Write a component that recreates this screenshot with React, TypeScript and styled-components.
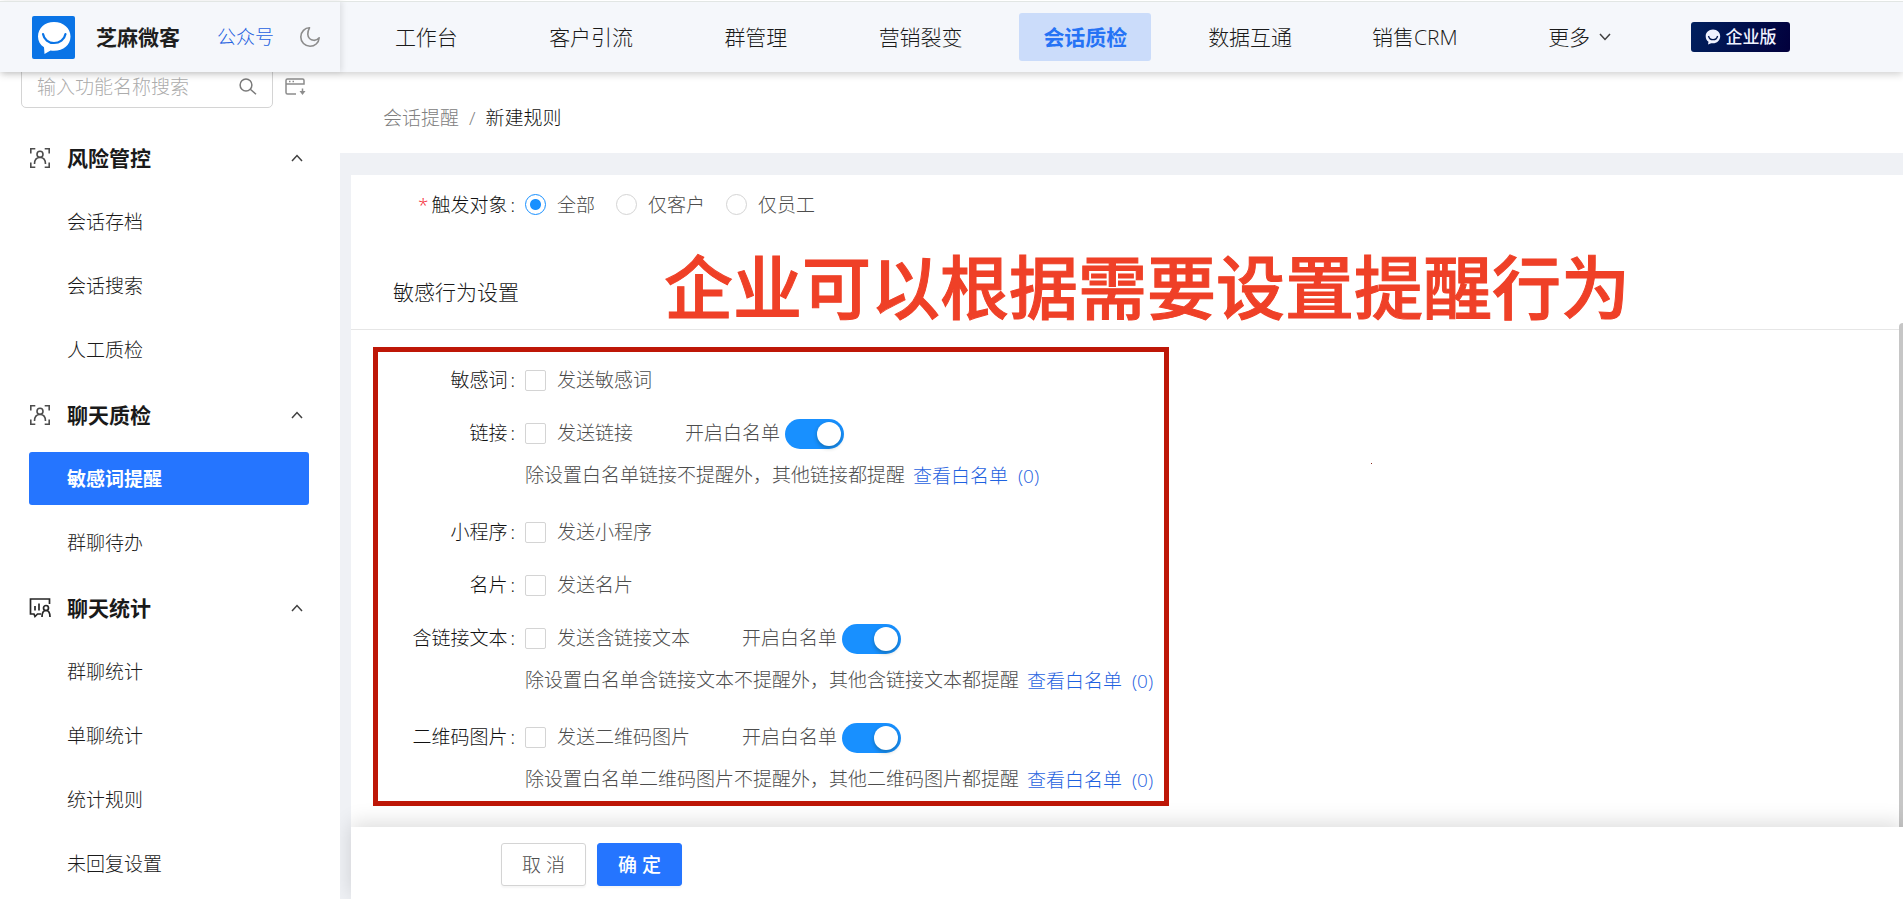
import React, { useState } from "react";
import styled, { createGlobalStyle, css } from "styled-components";

const GlobalStyle = createGlobalStyle`
  * { box-sizing: border-box; }
  html, body, #root { height: 100%; }
  body {
    margin: 0;
    overflow: hidden;
    background: #fff;
    color: #1a1a1a;
    font-family: "Open Sans", "Noto Sans CJK SC", sans-serif;
    font-size: 19px;
    font-weight: 300;
    line-height: 28px;
  }
  button, input { font: inherit; color: inherit; }
  a { color: inherit; text-decoration: none; }
  svg { flex: none; }
`;

const Page = styled.div`
  display: flex;
  flex-direction: column;
  height: 100vh;
`;

const Header = styled.header`
  position: relative;
  z-index: 3;
  display: flex;
  flex: none;
  height: 72px;
  border-top: 1px solid #fff;
  background: #f5f7fb;
  box-shadow: 0 2px 8px rgba(0, 0, 0, 0.2);
`;

const Brand = styled.div`
  display: flex;
  align-items: center;
  flex: none;
  width: 340px;
  padding: 0 18px 0 32px;
  border-top: 1px solid #e2e6e4;
  box-shadow: 2px 0 6px rgba(0, 0, 0, 0.1);
`;

const BrandName = styled.strong`
  margin-left: 21px;
  font-size: 21px;
  font-weight: 700;
  color: #1f1f1f;
`;

const AccountLink = styled.a`
  margin: 0 25px 0 37px;
  color: #1f62e0;
`;

const IconButton = styled.button`
  display: flex;
  padding: 0;
  border: 0;
  background: none;
  color: #8c8c8c;
  cursor: pointer;
`;

const TopBar = styled.div`
  display: flex;
  align-items: center;
  flex: 1;
  min-width: 0;
  padding-left: 4px;
  border-top: 1px solid #e2e6e4;
`;

const Nav = styled.nav`
  display: flex;
  flex: 0 1 1318px;
`;

const NavCell = styled.div`
  display: flex;
  flex: 1;
  justify-content: center;
`;

const NavLink = styled.a<{ $active?: boolean }>`
  display: flex;
  align-items: center;
  gap: 9px;
  height: 48px;
  padding: 0 24px;
  border-radius: 3px;
  font-size: 21px;
  white-space: nowrap;
  ${(p) =>
    p.$active &&
    css`
      background: #cbdcfa;
      color: #2673f5;
      font-weight: 700;
    `}
`;

const Edition = styled.span`
  display: flex;
  align-items: center;
  justify-content: center;
  gap: 5px;
  width: 99px;
  height: 30px;
  margin-left: 29px;
  border-radius: 3px;
  background: linear-gradient(110deg, #00205e, #02003c);
  color: #f0f2ff;
  font-size: 17px;
  font-weight: 500;
`;

const Body = styled.div`
  display: flex;
  flex: 1;
  min-height: 0;
`;

const Sidebar = styled.aside`
  position: relative;
  z-index: 2;
  flex: none;
  width: 340px;
  background: #fff;
`;

const SearchRow = styled.div`
  display: flex;
  align-items: center;
  gap: 12px;
  margin: -6px 0 23px 21px;
`;

const SearchBox = styled.label`
  display: flex;
  align-items: center;
  width: 252px;
  height: 42px;
  padding: 0 15px;
  border: 1px solid #d4d4d4;
  border-radius: 5px;
  color: #7a7a7a;
`;

const SearchInput = styled.input`
  flex: 1;
  min-width: 0;
  padding: 0;
  border: 0;
  outline: 0;
  background: none;
  &::placeholder { color: #acacac; opacity: 1; }
`;

const Group = styled.section`
  margin: 0 31px 0 29px;
  padding-bottom: 1px;
`;

const GroupTitle = styled.button`
  display: flex;
  align-items: center;
  width: 100%;
  height: 53px;
  margin-bottom: 11px;
  padding: 0 6px 0 0;
  border: 0;
  background: none;
  text-align: left;
  font-size: 21px;
  font-weight: 700;
  cursor: pointer;
`;

const GroupName = styled.span`
  flex: 1;
  margin-left: 16px;
`;

const MenuLink = styled.a<{ $active?: boolean }>`
  display: flex;
  align-items: center;
  height: 53px;
  margin-bottom: 11px;
  padding-left: 38px;
  border-radius: 3px;
  ${(p) =>
    p.$active &&
    css`
      background: #2575ff;
      color: #fff;
      font-weight: 700;
    `}
`;

const Main = styled.main`
  display: flex;
  flex: 1;
  flex-direction: column;
  min-width: 0;
  background: #eff1f5;
`;

const Breadcrumb = styled.nav`
  display: flex;
  align-items: center;
  gap: 10px;
  height: 81px;
  padding: 10px 0 0 43px;
  background: #fff;
  color: #808080;
`;

const Current = styled.span`
  color: #111;
`;

const Panel = styled.div`
  position: relative;
  flex: 1;
  min-height: 0;
  margin: 22px 0 0 11px;
  background: #fff;
`;

const ScrollThumb = styled.div`
  position: absolute;
  top: 148px;
  right: 0;
  bottom: 0;
  width: 4px;
  border-radius: 4px 0 0 0;
  background: #c6c6c6;
`;

const TargetRow = styled.div`
  display: flex;
  align-items: center;
  height: 59px;
`;

const FieldLabel = styled.span<{ $inset: number }>`
  display: flex;
  justify-content: flex-end;
  gap: 3px;
  flex: none;
  width: ${(p) => p.$inset}px;
  padding-right: 10px;
  color: #111;
`;

const Star = styled.span`
  color: #f5222d;
`;

const Choice = styled.label`
  display: flex;
  align-items: center;
  gap: 11px;
  margin-right: 21px;
  color: #4d4d4d;
`;

const Radio = styled.input`
  appearance: none;
  width: 21px;
  height: 21px;
  margin: 0;
  border: 1px solid #d4d4d4;
  border-radius: 50%;
  background: #fff;
  &:checked {
    border-color: #1890ff;
    background: radial-gradient(circle, #1890ff 5px, #fff 6px);
  }
`;

const Checkbox = styled.input`
  appearance: none;
  width: 21px;
  height: 21px;
  margin: 0;
  border: 1px solid #d4d4d4;
  border-radius: 2px;
  background: #fff;
  &:checked { border-color: #1890ff; background: #1890ff; }
`;

const SectionHead = styled.div`
  display: flex;
  align-items: center;
  height: 96px;
  padding: 20px 0 0 42px;
  border-bottom: 1px solid #e6e6e6;
`;

const SectionTitle = styled.h2`
  margin: 0;
  font-size: 21px;
  font-weight: 300;
`;

const Callout = styled.div`
  position: absolute;
  top: 62px;
  left: 313px;
  color: #ef4027;
  font-size: 69px;
  font-weight: 500;
  -webkit-text-stroke: 1px #ef4027;
  line-height: 100px;
  white-space: nowrap;
`;

const RedDot = styled.i`
  position: absolute;
  top: 288px;
  left: 1020px;
  width: 1px;
  height: 1px;
  background: #8a2a1c;
`;

const Highlight = styled.div`
  max-width: 796px;
  margin: 17px 0 0 22px;
  padding: 7px 0 1px;
  border: 5px solid #be1707;
`;

const Rule = styled.div<{ $tall: boolean }>`
  &:not(:last-child) { margin-bottom: ${(p) => (p.$tall ? 15 : 11)}px; }
`;

const RuleLine = styled.div`
  display: flex;
  align-items: center;
  height: 42px;
  white-space: nowrap;
`;

const SwitchLabel = styled.label`
  display: flex;
  align-items: center;
  gap: 5px;
  margin-left: 31px;
  color: #4d4d4d;
`;

const Switch = styled.input`
  appearance: none;
  display: flex;
  align-items: center;
  width: 59px;
  height: 30px;
  margin: 2px 0 0;
  padding: 0 3px;
  border-radius: 15px;
  background: #bfbfbf;
  &::before {
    content: "";
    width: 24px;
    height: 24px;
    border-radius: 50%;
    background: #fff;
    box-shadow: 0 2px 4px rgba(0, 35, 11, 0.3);
  }
  &:checked { justify-content: flex-end; background: #1890ff; }
`;

const Help = styled.p`
  display: flex;
  align-items: center;
  gap: 8px;
  height: 42px;
  margin: 0;
  padding-left: 147px;
  color: #4d4d4d;
  white-space: nowrap;
`;

const HelpLink = styled.a`
  padding-top: 2px;
  color: #1f62e0;
  white-space: pre;
`;

const Footer = styled.footer`
  position: relative;
  z-index: 1;
  display: flex;
  gap: 11px;
  flex: none;
  height: 72px;
  margin-left: 11px;
  padding: 16px 0 0 150px;
  background: #fff;
  box-shadow: 0 -4px 20px rgba(0, 0, 0, 0.14);
`;

const Button = styled.button<{ $primary?: boolean }>`
  width: 85px;
  height: 43px;
  padding: 0;
  border: 1px solid ${(p) => (p.$primary ? "#2575ff" : "#d4d4d4")};
  border-radius: 3px;
  background: ${(p) => (p.$primary ? "#2575ff" : "#fff")};
  color: ${(p) => (p.$primary ? "#fff" : "#4d4d4d")};
  font-weight: ${(p) => (p.$primary ? 500 : 300)};
  box-shadow: 0 2px 2px rgba(0, 0, 0, 0.04);
  cursor: pointer;
`;

const Logo = () => (
  <svg width="43" height="43" viewBox="0 0 43 43" aria-hidden="true">
    <rect width="43" height="43" rx="2" fill="#0a74e6" />
    <path d="M22 6C13 6 6 12 6 20.500c0 4.500 2.200 8.300 6 10.800L12.500 38l6-3.500c1.100.2 2.300.3 3.500.3 9.500 0 16.500-6 16.500-14.300S31.500 6 22 6Z" fill="#fff" />
    <path d="M11 18c1 5.500 5.500 9 11 9s10.500-3.500 11.500-9" fill="none" stroke="#0a74e6" strokeWidth="2.200" strokeLinecap="round" />
  </svg>
);

const Moon = () => (
  <svg width="22" height="22" viewBox="0 0 22 22" fill="none" stroke="currentColor" strokeWidth="1.600" strokeLinejoin="round" aria-hidden="true">
    <path d="M10.500 1.800C6 1.700 1.800 5.600 1.800 11A9.300 9.300 0 0 0 11 20.300c4.700 0 8.800-3.300 9.200-8.600-1.700 2-3.500 2.800-5.500 2.600-3.200-.3-5.800-2.900-5.900-6.100 0-2.400.6-4.500 1.700-6.400Z" />
  </svg>
);

const SearchIcon = () => (
  <svg width="18" height="18" viewBox="0 0 18 18" fill="none" stroke="currentColor" strokeWidth="1.500" aria-hidden="true">
    <circle cx="7" cy="7" r="5.900" />
    <path d="m11.300 11.300 5.700 5" />
  </svg>
);

const WindowIcon = () => (
  <svg width="21" height="18" viewBox="0 0 21 18" fill="none" stroke="currentColor" strokeWidth="1.500" aria-hidden="true">
    <path d="M11 16H2.500A1.500 1.500 0 0 1 1 14.500v-12A1.500 1.500 0 0 1 2.500 1h15A1.500 1.500 0 0 1 19 2.500V6H1M17.500 10.500V15" />
    <path d="M4 3.500h1.500M7.500 3.500H9" />
    <path d="M14.500 13h6l-3 4Z" fill="currentColor" stroke="none" />
  </svg>
);

const Chevron = ({ up }: { up?: boolean }) => (
  <svg width="12" height="8" viewBox="0 0 12 8" fill="none" stroke="#404040" strokeWidth="1.500" aria-hidden="true">
    <path d={up ? "M1 7 6 1.500 11 7" : "M1 1 6 6.500 11 1"} />
  </svg>
);

const ScanUser = () => (
  <svg width="22" height="22" viewBox="0 0 22 22" fill="none" stroke="#4d4d4d" strokeWidth="1.600" aria-hidden="true">
    <path d="M1.800 6.500V1.800h4.500M15.700 1.800h4.500v4.700M20.200 15.500v4.700h-4.500M6.300 20.200H1.800v-4.700" />
    <circle cx="11" cy="7.300" r="3" />
    <path d="M5.500 17c0-4 2.200-6.500 5.500-6.500s5.500 2.500 5.500 6.500" />
  </svg>
);

const ChatStats = () => (
  <svg width="22" height="22" viewBox="0 0 22 22" fill="none" stroke="#262626" strokeWidth="1.700" aria-hidden="true">
    <path d="M20.500 7V2H1.500v15H5l1 2.500L8.500 17H12M6 9v4.500M10 6.500v7" />
    <circle cx="17" cy="11" r="2.500" />
    <path d="M13 20c0-4 1.500-6.500 4-6.500s4 2.500 4 6.500" />
  </svg>
);

const EditionMark = () => (
  <svg width="16" height="16" viewBox="0 0 16 16" aria-hidden="true">
    <path d="M8 .5C3.700.5.700 3.500.700 7.200c0 2.300 1 4.300 2.800 5.500L3 15.500l3.200-1.300c5 1 9-2.500 9-7C15.200 3.500 12.300.5 8 .5Z" fill="#f0f2ff" />
    <path d="M3.500 7c.6 2.400 2.300 3.700 4.500 3.700S12 9.400 12.600 7" fill="none" stroke="#011650" strokeWidth="1.300" />
  </svg>
);

const navItems = ["工作台", "客户引流", "群管理", "营销裂变", "会话质检", "数据互通", "销售CRM", "更多"];

const menu = [
  { name: "风险管控", icon: <ScanUser />, items: ["会话存档", "会话搜索", "人工质检"] },
  { name: "聊天质检", icon: <ScanUser />, items: ["敏感词提醒", "群聊待办"] },
  { name: "聊天统计", icon: <ChatStats />, items: ["群聊统计", "单聊统计", "统计规则", "未回复设置"] },
];

const rules = [
  { name: "敏感词", whitelist: false },
  { name: "链接", whitelist: true },
  { name: "小程序", whitelist: false },
  { name: "名片", whitelist: false },
  { name: "含链接文本", whitelist: true },
  { name: "二维码图片", whitelist: true },
];

export default function App() {
  const [target, setTarget] = useState("全部");

  return (
    <Page>
      <GlobalStyle />
      <Header>
        <Brand>
          <Logo />
          <BrandName>芝麻微客</BrandName>
          <AccountLink href="#account">公众号</AccountLink>
          <IconButton type="button" aria-label="深色模式"><Moon /></IconButton>
        </Brand>
        <TopBar>
          <Nav>
            {navItems.map((item) => (
              <NavCell key={item}>
                <NavLink href="#nav" $active={item === "会话质检"}>
                  {item}
                  {item === "更多" && <Chevron />}
                </NavLink>
              </NavCell>
            ))}
          </Nav>
          <Edition><EditionMark />企业版</Edition>
        </TopBar>
      </Header>
      <Body>
        <Sidebar>
          <SearchRow>
            <SearchBox>
              <SearchInput type="text" placeholder="输入功能名称搜索" aria-label="输入功能名称搜索" />
              <SearchIcon />
            </SearchBox>
            <IconButton type="button" aria-label="收起菜单"><WindowIcon /></IconButton>
          </SearchRow>
          {menu.map((group) => (
            <Group key={group.name}>
              <GroupTitle type="button">
                {group.icon}
                <GroupName>{group.name}</GroupName>
                <Chevron up />
              </GroupTitle>
              {group.items.map((item) => (
                <MenuLink key={item} href="#menu" $active={item === "敏感词提醒"}>{item}</MenuLink>
              ))}
            </Group>
          ))}
        </Sidebar>
        <Main>
          <Breadcrumb>
            <a href="#alerts">会话提醒</a>
            <span>/</span>
            <Current>新建规则</Current>
          </Breadcrumb>
          <Panel>
            <TargetRow role="radiogroup" aria-label="触发对象">
              <FieldLabel $inset={174}><Star>*</Star><span>触发对象</span><span>:</span></FieldLabel>
              {["全部", "仅客户", "仅员工"].map((name) => (
                <Choice key={name}>
                  <Radio type="radio" name="target" checked={target === name} onChange={() => setTarget(name)} />
                  {name}
                </Choice>
              ))}
            </TargetRow>
            <SectionHead>
              <SectionTitle>敏感行为设置</SectionTitle>
            </SectionHead>
            <Highlight>
              {rules.map(({ name, whitelist }) => (
                <Rule key={name} $tall={whitelist}>
                  <RuleLine>
                    <FieldLabel $inset={147}><span>{name}</span><span>:</span></FieldLabel>
                    <Choice><Checkbox type="checkbox" />发送{name}</Choice>
                    {whitelist && (
                      <SwitchLabel>开启白名单<Switch type="checkbox" role="switch" defaultChecked /></SwitchLabel>
                    )}
                  </RuleLine>
                  {whitelist && (
                    <Help>
                      除设置白名单{name}不提醒外，其他{name}都提醒
                      <HelpLink href="#whitelist">查看白名单  (0)</HelpLink>
                    </Help>
                  )}
                </Rule>
              ))}
            </Highlight>
            <Callout>企业可以根据需要设置提醒行为</Callout>
            <RedDot />
            <ScrollThumb />
          </Panel>
          <Footer>
            <Button type="button">取 消</Button>
            <Button type="submit" $primary>确 定</Button>
          </Footer>
        </Main>
      </Body>
    </Page>
  );
}
